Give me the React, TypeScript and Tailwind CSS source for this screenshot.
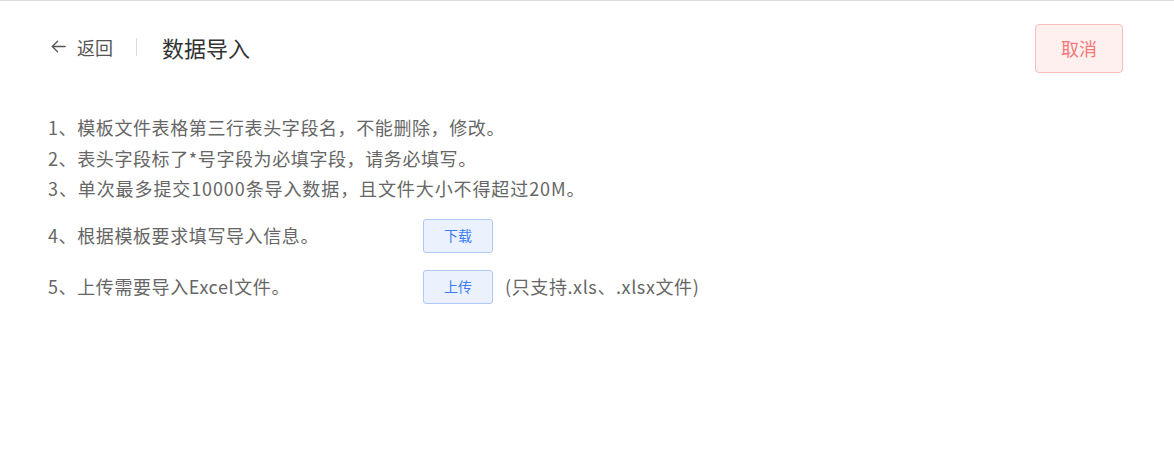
import React from "react";

const font = { fontFamily: '"Noto Sans CJK SC", "Noto Sans", sans-serif' };

export default function App() {
  return (
    <div className="w-[1174px] h-[456px] bg-white border-t border-[#dcdcdc] text-[#666]" style={font}>
      <div className="flex items-center justify-between pl-[50px] pr-[51px] pt-[23px]">
        <div className="flex items-center h-[49px] pb-[4px]">
          <div className="flex items-center gap-[10px] text-[#555]">
            <svg width="17" height="17" viewBox="0 0 18 18" fill="none" stroke="#555" strokeWidth="1.4" strokeLinecap="round" strokeLinejoin="round">
              <path d="M16 9H2.5" />
              <path d="M8 3.5L2.5 9L8 14.5" />
            </svg>
            <span className="text-[18px] leading-none">返回</span>
          </div>
          <div className="w-px h-[18px] bg-[#d8dce3] ml-[23px] mr-[25px]" />
          <span className="text-[22px] leading-none text-[#333]">数据导入</span>
        </div>
        <button className="w-[88px] h-[49px] rounded-[4px] border border-[#fbbcbc] bg-[#fff0f0] text-[#f47878] text-[18px]">
          取消
        </button>
      </div>

      <div className="pl-[48px] pt-[39px] text-[18px] tracking-[0.6px]">
        <div className="leading-[30.5px]">1、模板文件表格第三行表头字段名，不能删除，修改。</div>
        <div className="leading-[30.5px]">2、表头字段标了*号字段为必填字段，请务必填写。</div>
        <div className="leading-[30.5px] tracking-[0.9px]">3、单次最多提交10000条导入数据，且文件大小不得超过20M。</div>
        <div className="flex items-center mt-[15px] h-[34px]">
          <span className="w-[375px]">4、根据模板要求填写导入信息。</span>
          <button className="w-[70px] h-[34px] rounded-[3px] border border-[#b0c8fa] bg-[#ebf2fe] text-[#3b7cf4] text-[14px] tracking-normal">
            下载
          </button>
        </div>
        <div className="flex items-center mt-[17px] h-[34px]">
          <span className="w-[375px]">5、上传需要导入Excel文件。</span>
          <button className="w-[70px] h-[34px] rounded-[3px] border border-[#b0c8fa] bg-[#ebf2fe] text-[#3b7cf4] text-[14px] tracking-normal">
            上传
          </button>
          <span className="ml-[12px]">(只支持.xls、.xlsx文件)</span>
        </div>
      </div>
    </div>
  );
}
